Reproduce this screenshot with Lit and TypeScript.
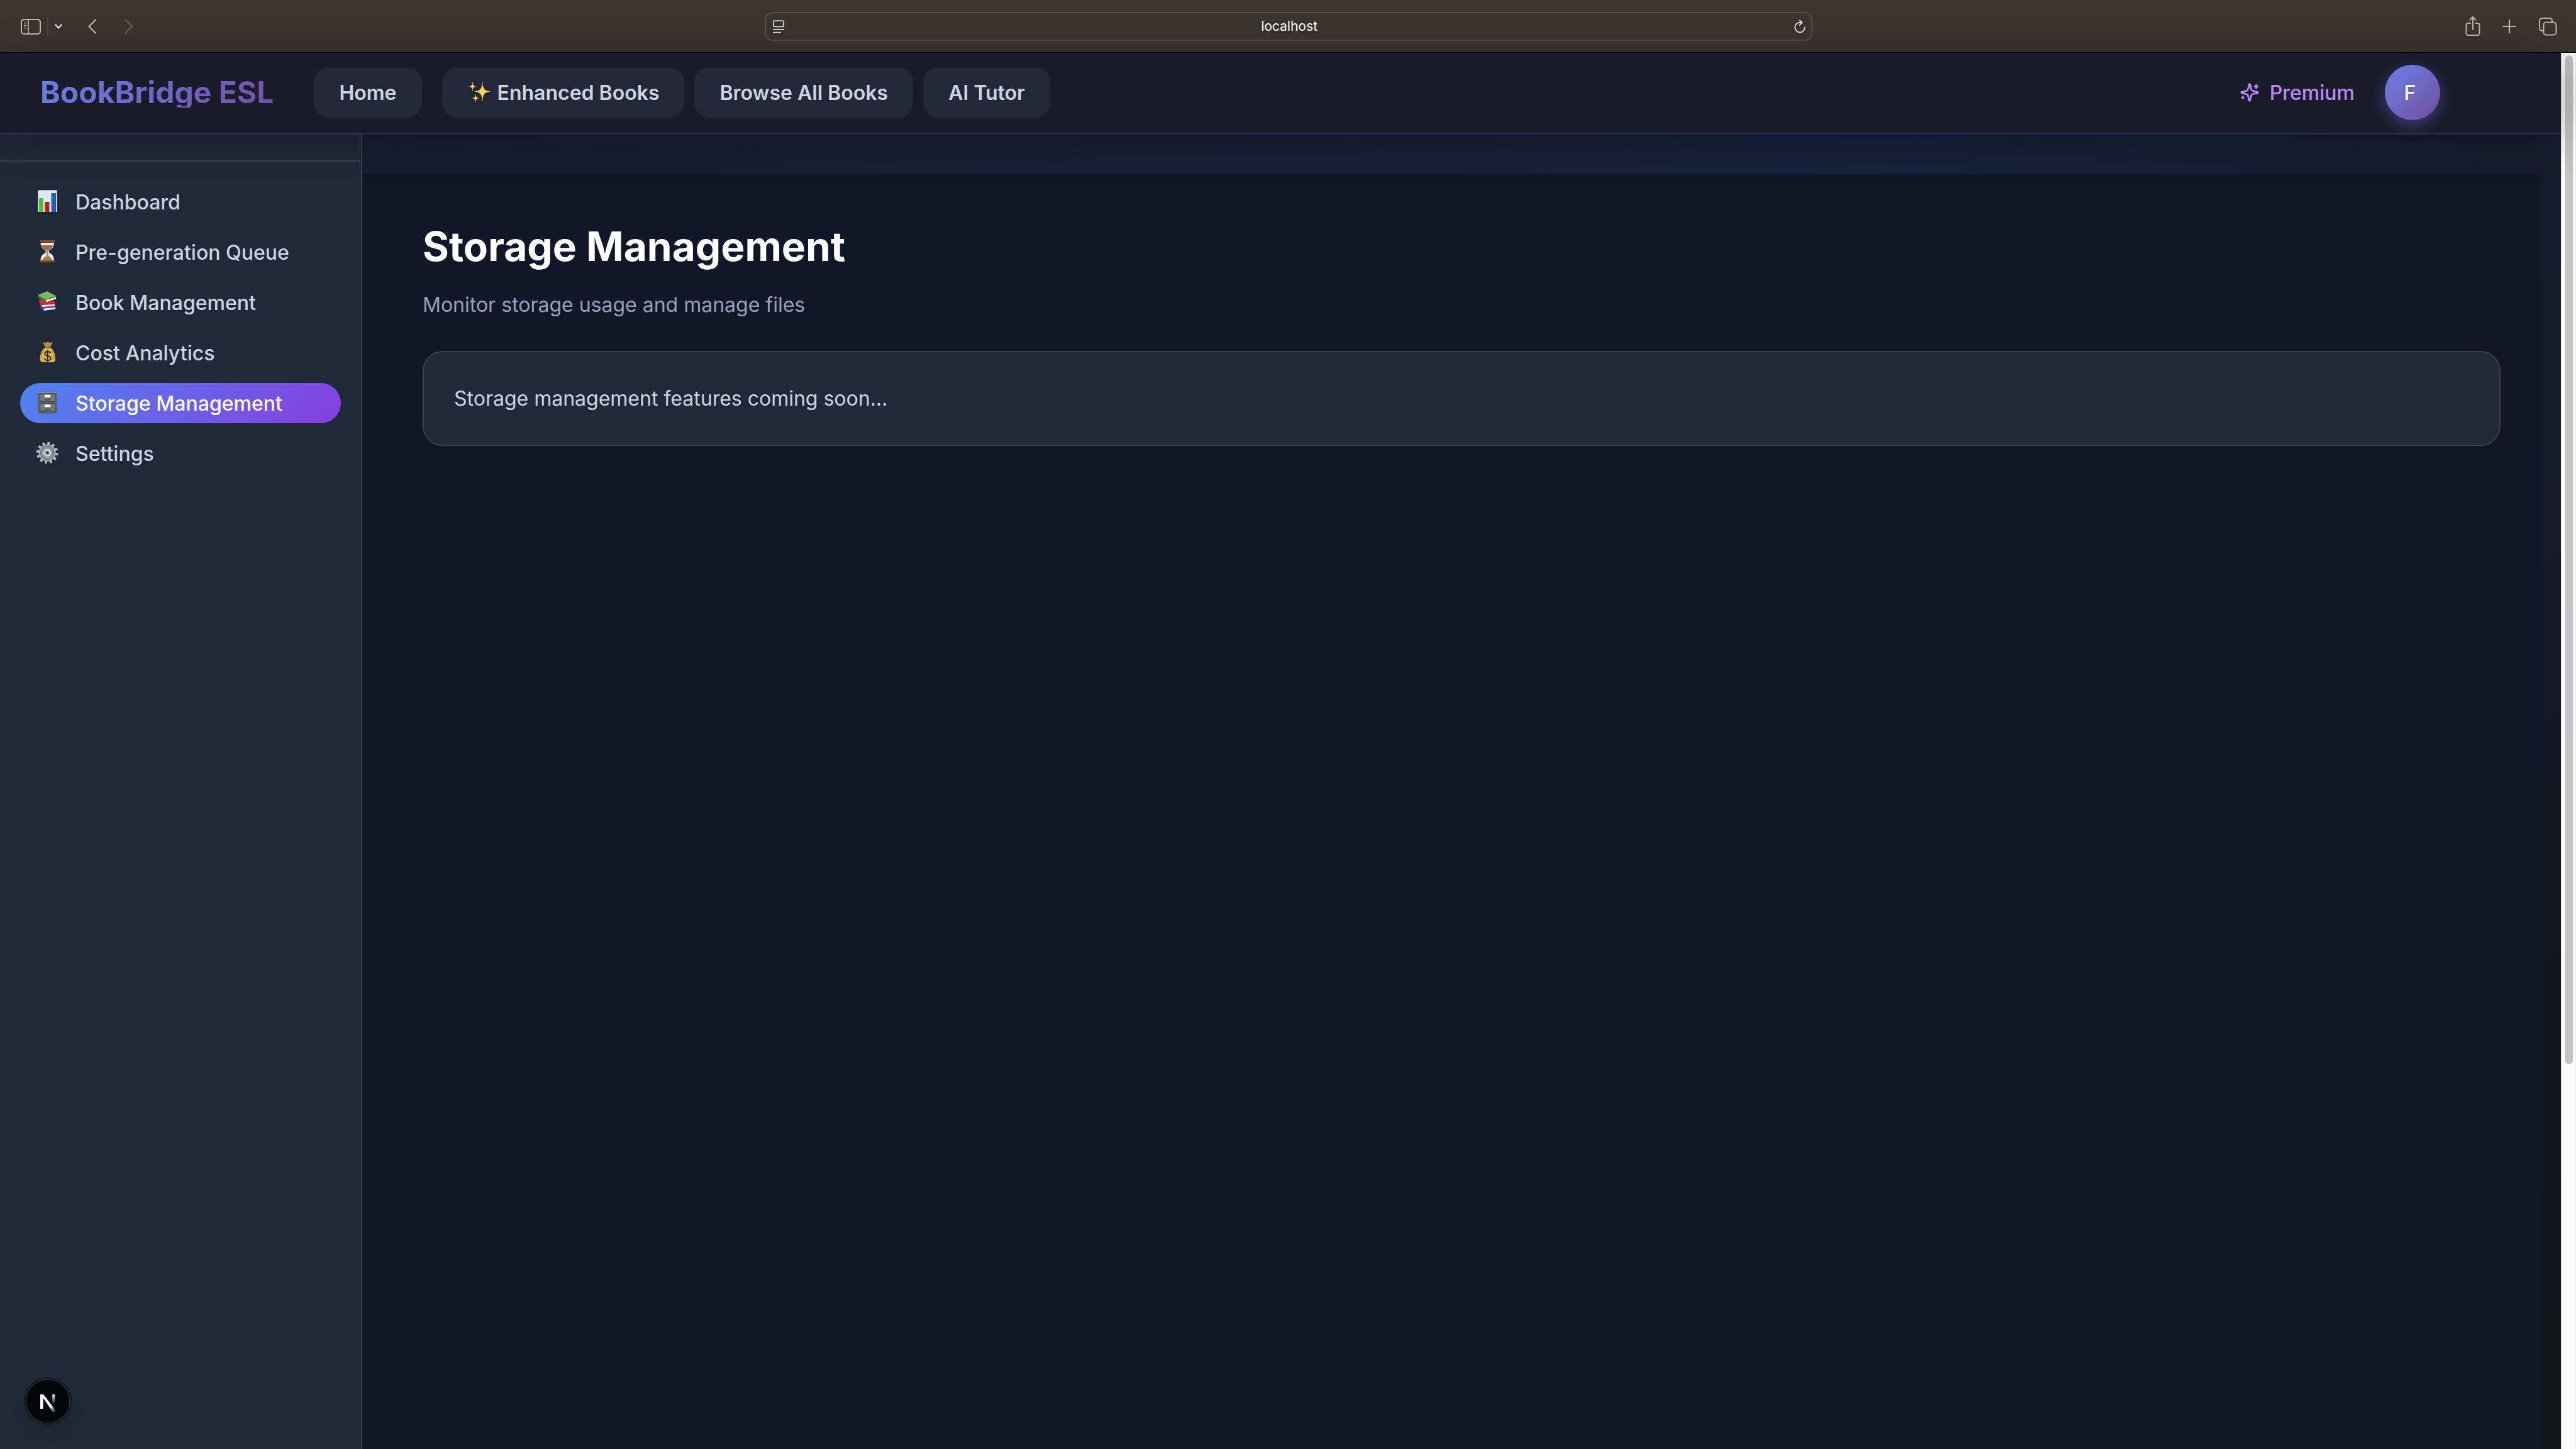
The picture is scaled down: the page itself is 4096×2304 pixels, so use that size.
import { LitElement, html, svg, css, TemplateResult, SVGTemplateResult } from "lit";
import { customElement, state } from "lit/decorators.js";
import { classMap } from "lit/directives/class-map.js";

const chartIcon = svg`
  <rect x="4" y="1" width="31" height="35" fill="#9fa6b4"/>
  <rect x="5" y="2" width="29" height="34" fill="#e3eaf3"/>
  <path d="M5 9h29M5 15h29M5 21h29M5 27h29M12 2v34M19 2v34M26 2v34" stroke="#cfd8e5" stroke-width=".6"/>
  <rect x="6" y="14" width="7" height="22" fill="#57bb3b"/>
  <rect x="15.500" y="20" width="7" height="16" fill="#b3241b"/>
  <rect x="25.500" y="6" width="7.500" height="30" fill="#255cc0"/>`;

const hourglassIcon = svg`
  <path d="M8.500 5h21.500c0 7-3 9.500-8 12.500v3c5 3 8 6 8 12.500H8.500c0-6.500 3-9.500 8-12.500v-3c-5-3-8-5.500-8-12.500z" fill="#d9dde8"/>
  <path d="M9 9h20c-1 4-4 6-8 8.500h-4C13 15 10 13 9 9z" fill="#9c7152"/>
  <path d="M10 6h18v2H10z" fill="#fff"/>
  <path d="M18.500 18h1.500l.5 8c3 1.500 6 4 7 7H11c1-3 4-5.500 7-7z" fill="#a5804c"/>
  <path d="M10 31c0-4 2-7 5-9l-1 6zM29 31c0-4-2-7-5-9l1 6z" fill="#fff"/>
  <rect x="7" y="1" width="25" height="4" rx="1.500" fill="#6b3a20"/>
  <rect x="8" y="1.600" width="23" height="1.200" rx=".6" fill="#9b6443"/>
  <rect x="7" y="32.500" width="25" height="4" rx="1.500" fill="#6b3a20"/>
  <rect x="8" y="33" width="23" height="1.200" rx=".6" fill="#9b6443"/>`;

const booksIcon = svg`
  <path d="M4 14l5 17 4 2.500 20-2v-5l-20-4z" fill="#27389b"/>
  <path d="M13 29.500l19-2v3l-18 2.500z" fill="#dfe4ee"/>
  <path d="M6 15l3 10 3 3 20-2-1-8-18-3z" fill="#c9302a"/>
  <path d="M10 24l21-1v2.500l-20 1.500z" fill="#e8e8ec"/>
  <path d="M4 8L19 2l15 8-18 5.500z" fill="#7cb765"/>
  <path d="M4 8v4l13 7.500 17-5.500v-2l-17 4z" fill="#3f7d34"/>
  <path d="M17 16l16-4.800v3L18 19c-1.500-1-1.500-2-1-3z" fill="#f1f1ee"/>`;

const bagIcon = svg`
  <path d="M12 3l4 1 4-1.500 3.500 1.500 4.500-1.500-4.500 9h-7.500z" fill="#b98f3c"/>
  <path d="M16 11h8c5 4 8 11 8 17.500 0 5-2 6.500-6 6.500H14c-4.500 0-6.500-1.500-6.500-6.500C7.500 22 11 15 16 11z" fill="#d9b450"/>
  <path d="M14 15c-3 4-5 9-4.500 15M26 15c3 4 4.500 9 4 15" stroke="#b08a35" stroke-width="1.200" fill="none"/>
  <path d="M15 11.500h9.500" stroke="#7f5c20" stroke-width="1.600"/>
  <path d="M24.500 20.500c-.8-1.700-2.500-2.500-4.700-2.500-2.600 0-4.500 1.300-4.500 3.500 0 4.800 9.500 2.400 9.500 7 0 2.200-2 3.500-4.900 3.500-2.600 0-4.500-1-5.200-3M19.800 15.800v18.400" stroke="#2f2a20" stroke-width="1.900" fill="none"/>`;

const cabinetIcon = svg`
  <rect x="4.500" y="2" width="30" height="34.500" rx="1" fill="#5a6164"/>
  <rect x="4.500" y="2" width="30" height="1.500" fill="#9aa1a4"/>
  <rect x="7.500" y="5" width="24" height="12.500" fill="#71797c" stroke="#42484b"/>
  <rect x="7.500" y="20.500" width="24" height="12.500" fill="#71797c" stroke="#42484b"/>
  <rect x="14.500" y="6.500" width="10" height="4.500" fill="#fff" stroke="#8f9699"/>
  <rect x="14.500" y="22" width="10" height="4.500" fill="#fff" stroke="#8f9699"/>
  <path d="M15 13.500c0 2 9 2 9 0M15 29.500c0 2 9 2 9 0" stroke="#3b4144" stroke-width="1.500" fill="none"/>`;

const gearTeeth = Array.from({ length: 12 }, (_, i) => svg`
  <rect x="17.200" y="1.600" width="4" height="6" rx="1" fill="#b4b8bf" transform="rotate(${i * 30 + 8} 19.2 19)"/>`);

const gearIcon = svg`
  ${gearTeeth}
  <circle cx="19.200" cy="19" r="13.500" fill="#a9adb5"/>
  <circle cx="19.200" cy="19" r="10.800" fill="#8b8f97" stroke="#64686f" stroke-width="1.200"/>
  <circle cx="19.200" cy="19" r="8" fill="none" stroke="#a3a7ae" stroke-width="1"/>
  <circle cx="19.200" cy="19" r="4.700" fill="#777b83" stroke="#d9dce2" stroke-width="2.600"/>
  <circle cx="19.200" cy="19" r="1.600" fill="#2c3340"/>`;

interface NavItem {
  id: string;
  label: string;
  icon: SVGTemplateResult;
}

const SIDE_ITEMS: NavItem[] = [
  { id: "dashboard", label: "Dashboard", icon: chartIcon },
  { id: "queue", label: "Pre-generation Queue", icon: hourglassIcon },
  { id: "books", label: "Book Management", icon: booksIcon },
  { id: "costs", label: "Cost Analytics", icon: bagIcon },
  { id: "storage", label: "Storage Management", icon: cabinetIcon },
  { id: "settings", label: "Settings", icon: gearIcon },
];

@customElement("app-root")
export class AppRoot extends LitElement {
  @state() private active = "storage";

  static styles = css`
    :host {
      display: block;
      font-family: Inter, "Liberation Sans", sans-serif;
      font-size: 32px;
      line-height: 51px;
      color: #cbd5e1;
    }
    * {
      box-sizing: border-box;
    }
    a {
      color: inherit;
      text-decoration: none;
    }
    button {
      font: inherit;
      color: inherit;
      background: none;
      border: 0;
      padding: 0;
      display: flex;
      align-items: center;
      justify-content: center;
    }
    svg {
      display: block;
      flex: none;
    }
    .window {
      min-height: 100vh;
      display: flex;
      flex-direction: column;
    }

    .toolbar {
      display: grid;
      grid-template-columns: 1fr minmax(0, 1666px) 1fr;
      align-items: center;
      height: 84px;
      padding: 0 30px 0 32px;
      background: #3b3532;
      border-bottom: 1px solid #000;
      color: #bcb7b3;
    }
    .tools {
      display: flex;
      align-items: center;
      gap: 40px;
    }
    .tools-pair {
      display: flex;
      align-items: center;
      gap: 9px;
    }
    .tools-history {
      display: flex;
      gap: 44px;
    }
    .tools-end {
      justify-content: flex-end;
      gap: 34px;
    }
    .divider {
      width: 2px;
      height: 30px;
      background: #4d4744;
    }
    .bright {
      color: #eceae8;
    }
    .dim {
      color: #68625e;
    }
    .address {
      display: flex;
      align-items: center;
      height: 46px;
      padding: 0 8px 0 10px;
      border: 2px solid #524d4a;
      border-radius: 12px;
      color: #e6e4e2;
    }
    .address-text {
      flex: 1;
      min-width: 0;
      border: 0;
      padding: 0;
      background: none;
      color: #fff;
      font: 400 21px/28px Inter, "Liberation Sans", sans-serif;
      text-align: center;
    }

    .viewport {
      flex: 1;
      display: flex;
    }
    .page {
      flex: 1;
      min-width: 0;
      display: flex;
      flex-direction: column;
      background: linear-gradient(135deg, #1b1b2e 0%, #17213c 50%, #101416 100%);
    }
    .scrollbar {
      width: 24px;
      padding: 4px 4px 4px 5px;
      background: #fafafa;
      border-left: 2px solid #e8e8e8;
      border-right: 1px solid #ececec;
      display: flex;
    }
    .thumb {
      width: 100%;
      height: 72.5%;
      border-radius: 8px;
      background: #c2c2c2;
    }

    .header {
      position: relative;
      z-index: 1;
      display: flex;
      align-items: center;
      padding: 19px 192px 20px 64px;
      background: #1a1b2b;
      border-bottom: 2px solid #2a2e50;
      box-shadow: 0 2px 0 rgba(102, 126, 234, 0.1), 0 8px 64px rgba(0, 0, 0, 0.3);
    }
    .brand {
      font-size: 48px;
      line-height: 48px;
      font-weight: 700;
      background: linear-gradient(135deg, #6b80e6, #744fa0);
      -webkit-background-clip: text;
      background-clip: text;
      color: transparent;
      margin-right: 64px;
    }
    .menu {
      display: flex;
      gap: 16px;
      flex: 1;
      font-weight: 600;
    }
    .menu-link {
      display: flex;
      align-items: center;
      gap: 8px;
      height: 80px;
      padding: 0 40px;
      border-radius: 24px;
      background: #242737;
      white-space: nowrap;
    }
    .menu-home {
      margin-right: 16px;
    }
    .account {
      display: flex;
      align-items: center;
      gap: 48px;
      font-weight: 500;
    }
    .premium {
      display: flex;
      align-items: center;
      gap: 16px;
      color: #b98af6;
    }
    .avatar {
      width: 88px;
      height: 88px;
      padding-right: 8px;
      border-radius: 50%;
      background: linear-gradient(135deg, #6b80e6, #744fa0);
      box-shadow: 0 8px 24px rgba(102, 126, 234, 0.4);
      color: #fff;
    }

    .body {
      flex: 1;
      display: flex;
    }
    .sidebar {
      width: 576px;
      display: flex;
      flex-direction: column;
      background: #202939;
      border-right: 2px solid #364150;
    }
    .sidebar-top {
      height: 44px;
      border-bottom: 2px solid #364150;
    }
    .side-nav {
      flex: 1;
      display: flex;
      flex-direction: column;
      gap: 16px;
      padding: 32px;
    }
    .side-link {
      display: flex;
      align-items: center;
      gap: 24px;
      height: 64px;
      padding: 0 24px;
      border-radius: 32px;
      font-weight: 500;
    }
    .side-link.active {
      background: linear-gradient(135deg, #4f83ef, #873fdf);
      color: #fff;
    }
    .dev-badge {
      position: fixed;
      left: 38px;
      bottom: 38px;
      width: 76px;
      height: 76px;
      border-radius: 50%;
      background: #05060a;
      border: 2px solid #17181a;
      box-shadow: inset 0 0 0 2px #2b2c2f, 0 16px 32px -8px rgba(0, 0, 0, 0.12);
    }

    .main {
      flex: 1;
      min-width: 0;
      display: flex;
      padding: 64px 32px 0 0;
    }
    .panel {
      flex: 1;
      min-width: 0;
      padding: 64px 64px 64px 96px;
      background: #111628;
    }
    .title {
      margin: 0 0 16px;
      font-size: 64px;
      line-height: 102px;
      font-weight: 700;
      color: #fff;
    }
    .subtitle {
      margin: 0 0 48px;
      color: #94a3b8;
    }
    .card {
      padding: 48px;
      background: #202939;
      border: 2px solid #364150;
      border-radius: 32px;
    }
    .card-text {
      margin: 0;
    }
  `;

  private toolbar(): TemplateResult {
    return html`
      <div class="toolbar">
        <div class="tools">
          <div class="tools-pair">
            <button aria-label="Toggle sidebar">
              <svg width="34" height="26" viewBox="0 0 34 26" fill="none" stroke="currentColor" stroke-width="2">
                <rect x="2" y="2" width="30" height="23" rx="4" />
                <path d="M13 2v23M6 7.500h4M6 11.500h4M6 15.500h4" stroke-width="1.700" />
              </svg>
            </button>
            <span class="divider"></span>
            <button class="bright" aria-label="Tab groups">
              <svg width="14" height="10" viewBox="0 0 14 10" fill="none" stroke="currentColor" stroke-width="2.200" stroke-linecap="round" stroke-linejoin="round">
                <path d="M2.500 2.500L7 7.500l4.500-5" />
              </svg>
            </button>
          </div>
          <div class="tools-history">
            <button aria-label="Back">
              <svg width="14" height="26" viewBox="0 0 14 26" fill="none" stroke="currentColor" stroke-width="2.200" stroke-linecap="round" stroke-linejoin="round">
                <path d="M12 2.500L1.500 13 12 23.500" />
              </svg>
            </button>
            <button class="dim" aria-label="Forward">
              <svg width="14" height="26" viewBox="0 0 14 26" fill="none" stroke="currentColor" stroke-width="2.200" stroke-linecap="round" stroke-linejoin="round">
                <path d="M1.500 2.500L12 13 1.500 23.500" />
              </svg>
            </button>
          </div>
        </div>
        <div class="address">
          <button aria-label="Page menu">
            <svg width="20" height="22" viewBox="0 0 20 22" fill="none" stroke="currentColor" stroke-width="1.700">
              <rect x="2" y="2" width="16" height="9.500" rx="2" />
              <path d="M1 15.800h18M1 20.500h13" />
            </svg>
          </button>
          <input class="address-text" type="text" aria-label="Address" .value=${"localhost"} />
          <button aria-label="Reload">
            <svg width="20" height="22" viewBox="0 0 20 22" fill="none" stroke="currentColor" stroke-width="1.800" stroke-linecap="round" stroke-linejoin="round">
              <path d="M17.800 12.500a7.800 7.800 0 1 1-7.800-7.800h3.500M9.500 1.500l4 3.300-4 4" />
            </svg>
          </button>
        </div>
        <div class="tools tools-end">
          <button aria-label="Share">
            <svg width="24" height="34" viewBox="0 0 24 34" fill="none" stroke="currentColor" stroke-width="2" stroke-linecap="round" stroke-linejoin="round">
              <path d="M8 12H4.500A3 3 0 0 0 1.500 15v13a3 3 0 0 0 3 3h15a3 3 0 0 0 3-3V15a3 3 0 0 0-3-3H16M12 22V2M7.500 6.500L12 2l4.500 4.500" />
            </svg>
          </button>
          <button aria-label="New tab">
            <svg width="24" height="24" viewBox="0 0 24 24" fill="none" stroke="currentColor" stroke-width="2.200" stroke-linecap="round">
              <path d="M12 2v20M2 12h20" />
            </svg>
          </button>
          <button aria-label="Tab overview">
            <svg width="30" height="30" viewBox="0 0 30 30" fill="none" stroke="currentColor" stroke-width="2">
              <rect x="8.500" y="8.500" width="20" height="20" rx="4" />
              <path d="M8.500 22H6a4 4 0 0 1-4-4V6a4 4 0 0 1 4-4h12a4 4 0 0 1 4 4v2.500" />
            </svg>
          </button>
        </div>
      </div>
    `;
  }

  private header(): TemplateResult {
    return html`
      <header class="header">
        <a class="brand" href="#home">BookBridge ESL</a>
        <nav class="menu" aria-label="Main">
          <a class="menu-link menu-home" href="#home">Home</a>
          <a class="menu-link" href="#enhanced">
            <svg width="40" height="40" viewBox="0 0 40 40" fill="#fbd85d" stroke="#d59a4a" stroke-width=".5" aria-hidden="true">
              <path d="M24 3c.7 10.500 2 14 12.500 15.500C26 20 24.700 23.500 24 34c-.7-10.500-2-14-12.500-15.500C22 17 23.300 13.500 24 3z" />
              <path d="M8.400 3c.4 5 1.100 6.800 5 7.500-3.900.7-4.600 2.500-5 7.500-.4-5-1.100-6.800-5-7.500 3.900-.7 4.600-2.500 5-7.500z" />
              <path d="M13.300 22.500c.4 4.600 1.200 6 5.200 6.600-4 .6-4.800 2-5.200 6.600-.4-4.600-1.200-6-5.200-6.600 4-.6 4.800-2 5.200-6.600z" />
            </svg>
            Enhanced Books
          </a>
          <a class="menu-link" href="#browse">Browse All Books</a>
          <a class="menu-link" href="#tutor">AI Tutor</a>
        </nav>
        <div class="account">
          <a class="premium" href="#premium">
            <svg width="32" height="32" viewBox="0 0 24 24" fill="none" stroke="currentColor" stroke-width="2" stroke-linecap="round" stroke-linejoin="round" aria-hidden="true">
              <path d="M9.937 15.500A2 2 0 0 0 8.500 14.063l-6.135-1.582a.5.5 0 0 1 0-.962L8.500 9.936A2 2 0 0 0 9.937 8.500l1.582-6.135a.5.5 0 0 1 .963 0L14.063 8.500A2 2 0 0 0 15.500 9.937l6.135 1.581a.5.5 0 0 1 0 .964L15.500 14.063a2 2 0 0 0-1.437 1.437l-1.582 6.135a.5.5 0 0 1-.963 0z" />
              <path d="M20 3v4M22 5h-4M4 17v2M5 18H3" />
            </svg>
            Premium
          </a>
          <button class="avatar" aria-label="Account menu">F</button>
        </div>
      </header>
    `;
  }

  private sidebar(): TemplateResult {
    return html`
      <aside class="sidebar">
        <div class="sidebar-top"></div>
        <nav class="side-nav" aria-label="Admin">
          ${SIDE_ITEMS.map(
            (item) => html`
              <a
                class=${classMap({ "side-link": true, active: item.id === this.active })}
                href="#${item.id}"
                @click=${() => (this.active = item.id)}
              >
                <svg width="40" height="40" viewBox="0 0 40 40" aria-hidden="true">${item.icon}</svg>
                ${item.label}
              </a>
            `
          )}
        </nav>
        <button class="dev-badge" aria-label="Open developer tools">
          <svg width="72" height="72" viewBox="2 2 72 72" aria-hidden="true">
            <defs>
              <linearGradient id="diag" gradientUnits="userSpaceOnUse" x1="42" y1="46" x2="50" y2="56">
                <stop offset="0" stop-color="#fff" />
                <stop offset="1" stop-color="#fff" stop-opacity="0" />
              </linearGradient>
              <linearGradient id="stem" gradientUnits="userSpaceOnUse" x1="0" y1="27" x2="0" y2="43">
                <stop offset="0" stop-color="#fff" />
                <stop offset="1" stop-color="#fff" stop-opacity="0" />
              </linearGradient>
            </defs>
            <path d="M26 27.300h5.200L51 53.500l-4 3L30.600 33v17H26z" fill="url(#diag)" />
            <rect x="45.200" y="27.300" width="4" height="16.500" fill="url(#stem)" />
          </svg>
        </button>
      </aside>
    `;
  }

  render() {
    return html`
      <div class="window">
        ${this.toolbar()}
        <div class="viewport">
          <div class="page">
            ${this.header()}
            <div class="body">
              ${this.sidebar()}
              <main class="main">
                <section class="panel">
                  <h1 class="title">Storage Management</h1>
                  <p class="subtitle">Monitor storage usage and manage files</p>
                  <div class="card">
                    <p class="card-text">Storage management features coming soon...</p>
                  </div>
                </section>
              </main>
            </div>
          </div>
          <div class="scrollbar" aria-hidden="true"><div class="thumb"></div></div>
        </div>
      </div>
    `;
  }
}
